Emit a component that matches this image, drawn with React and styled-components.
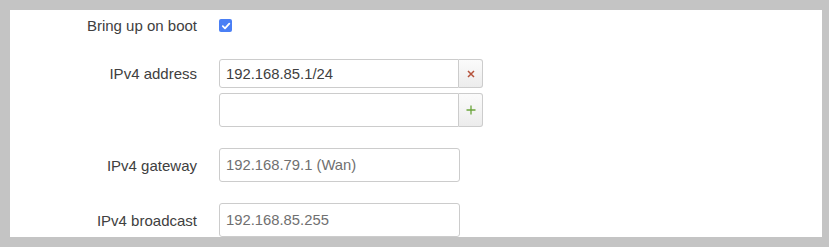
import React from "react";
import styled, { createGlobalStyle } from "styled-components";

const GlobalStyle = createGlobalStyle`
  html, body {
    margin: 0;
    padding: 0;
    background: #c4c4c4;
  }
  body {
    font-family: "Liberation Sans", Arial, sans-serif;
  }
`;

const Page = styled.div`
  width: 829px;
  height: 247px;
  padding: 10px 7px 10px 10px;
  box-sizing: border-box;
  background: #c4c4c4;
`;

const Panel = styled.div`
  width: 812px;
  height: 227px;
  background: #fff;
  overflow: hidden;
`;

const Form = styled.div`
  display: flex;
  flex-direction: column;
  gap: 21px;
  padding-top: 3px;
`;

const Row = styled.div`
  display: flex;
  align-items: ${p => (p.$top ? "flex-start" : "center")};
  min-height: ${p => p.$height || 34}px;
`;

const Label = styled.div`
  width: 187px;
  margin-right: 22px;
  flex-shrink: 0;
  text-align: right;
  font-size: 15px;
  color: #404040;
  line-height: ${p => p.$lineHeight || "normal"};
`;

const Check = styled.span`
  display: inline-flex;
  align-items: center;
  justify-content: center;
  width: 13px;
  height: 13px;
  border-radius: 2px;
  background: #4a7ff5;
`;

const DynList = styled.div`
  display: flex;
  flex-direction: column;
  gap: 5px;
`;

const Group = styled.div`
  display: flex;
  height: ${p => p.$height}px;
`;

const TextInput = styled.input`
  box-sizing: border-box;
  width: ${p => p.$width || 240}px;
  height: ${p => p.$height || 34}px;
  margin: 0;
  padding: 0 6px;
  border: 1px solid #ccc;
  border-radius: ${p => (p.$joined ? "3px 0 0 3px" : "3px")};
  background: #fff;
  font-family: "Liberation Sans", Arial, sans-serif;
  font-size: 14.8px;
  color: #404040;
  outline: none;

  &::placeholder {
    color: #707070;
  }
`;

const AddonButton = styled.button`
  box-sizing: border-box;
  width: 24px;
  height: 100%;
  margin: 0;
  padding: 0;
  border: 1px solid #ccc;
  border-left: none;
  border-radius: 0 3px 3px 0;
  background: linear-gradient(#fbfbfb, #ececec);
  display: flex;
  align-items: center;
  justify-content: center;
`;

const App = () => (
  <>
    <GlobalStyle />
    <Page>
      <Panel>
        <Form>
          <Row $height={25}>
            <Label>Bring up on boot</Label>
            <Check>
              <svg width="10" height="10" viewBox="0 0 10 10">
                <path
                  d="M1.8 5.2 L4 7.3 L8.3 2.6"
                  fill="none"
                  stroke="#fff"
                  strokeWidth="1.8"
                  strokeLinecap="round"
                  strokeLinejoin="round"
                />
              </svg>
            </Check>
          </Row>

          <Row $top>
            <Label $lineHeight="29px">IPv4 address</Label>
            <DynList>
              <Group $height={29}>
                <TextInput $joined $height={29} defaultValue="192.168.85.1/24" />
                <AddonButton title="Remove">
                  <svg width="8" height="8" viewBox="0 0 8 8">
                    <path d="M1 1 L7 7 M7 1 L1 7" stroke="#b5533c" strokeWidth="1.5" />
                  </svg>
                </AddonButton>
              </Group>
              <Group $height={34}>
                <TextInput $joined $height={34} />
                <AddonButton title="Add">
                  <svg width="10" height="10" viewBox="0 0 10 10">
                    <path d="M5 0.5 V9.5 M0.5 5 H9.5" stroke="#6aa43a" strokeWidth="1.3" />
                  </svg>
                </AddonButton>
              </Group>
            </DynList>
          </Row>

          <Row>
            <Label>IPv4 gateway</Label>
            <TextInput $width={241} placeholder="192.168.79.1 (Wan)" />
          </Row>

          <Row>
            <Label>IPv4 broadcast</Label>
            <TextInput $width={241} placeholder="192.168.85.255" />
          </Row>
        </Form>
      </Panel>
    </Page>
  </>
);

export default App;
